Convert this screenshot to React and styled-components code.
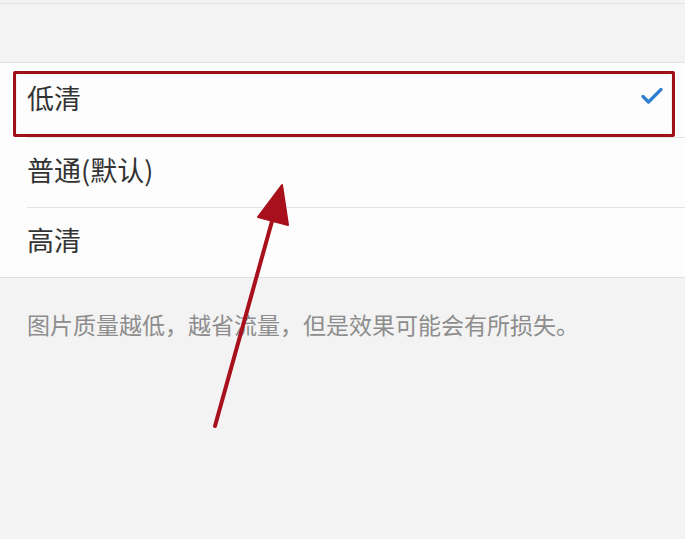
import React from 'react';
import styled, { createGlobalStyle } from 'styled-components';

const GlobalStyle = createGlobalStyle`
  html, body {
    margin: 0;
    padding: 0;
    background: #f3f3f3;
  }
  body {
    font-family: "Noto Sans CJK SC", "Noto Sans", sans-serif;
  }
`;

const Page = styled.div`
  position: relative;
  width: 685px;
  height: 539px;
  background: #f3f3f3;
  overflow: hidden;
`;

const TopBar = styled.div`
  height: 58px;
  margin-top: 3px;
  border-top: 1px solid #e2e2e2;
  border-bottom: 1px solid #e2e2e2;
  background: #f3f3f3;
`;

const List = styled.div`
  background: #fdfdfd;
  border-bottom: 1px solid #e0e0e0;
`;

const Row = styled.div`
  position: relative;
  display: flex;
  align-items: center;
  justify-content: space-between;
  box-sizing: border-box;
  height: ${({ h }) => h}px;
  margin-left: 27px;
  padding: 0 22px 6px 0;
  border-bottom: ${({ last }) => (last ? 'none' : '1px solid #e4e4e4')};
  font-size: 27px;
  color: #333;
  line-height: 1;
`;

const Label = styled.span`
  letter-spacing: 0;
`;

const Check = styled.svg`
  width: 22px;
  height: 18px;
`;

const Hint = styled.p`
  margin: 0;
  padding: 35px 0 0 27px;
  font-size: 23px;
  line-height: 1;
  color: #8d8d8d;
`;

const Highlight = styled.div`
  position: absolute;
  left: 13px;
  top: 71px;
  width: 656px;
  height: 60px;
  border: 3px solid #a01019;
  box-shadow: inset 0 0 1px #d67b7f;
  border-radius: 2px;
  pointer-events: none;
`;

const Arrow = styled.svg`
  position: absolute;
  left: 0;
  top: 0;
  width: 685px;
  height: 539px;
  pointer-events: none;
`;

const options = [
  { label: '低清', h: 75, selected: true },
  { label: '普通(默认)', h: 70 },
  { label: '高清', h: 69, last: true },
];

export default function App() {
  return (
    <Page>
      <GlobalStyle />
      <TopBar />
      <List>
        {options.map((o) => (
          <Row key={o.label} h={o.h} last={o.last}>
            <Label>{o.label}</Label>
            {o.selected && (
              <Check viewBox="0 0 22 18">
                <path d="M2 8.5 L7.5 14 L20 1.5" fill="none" stroke="#2f7fd0" strokeWidth="3.2" strokeLinecap="round" strokeLinejoin="round" />
              </Check>
            )}
          </Row>
        ))}
      </List>
      <Hint>图片质量越低，越省流量，但是效果可能会有所损失。</Hint>
      <Highlight />
      <Arrow viewBox="0 0 685 539">
        <line x1="215" y1="426" x2="274" y2="214" stroke="#a8101b" strokeWidth="4" strokeLinecap="round" />
        <polygon points="282,185 258,217 288,225" fill="#a8101b" stroke="#a8101b" strokeWidth="2" strokeLinejoin="round" />
      </Arrow>
    </Page>
  );
}
